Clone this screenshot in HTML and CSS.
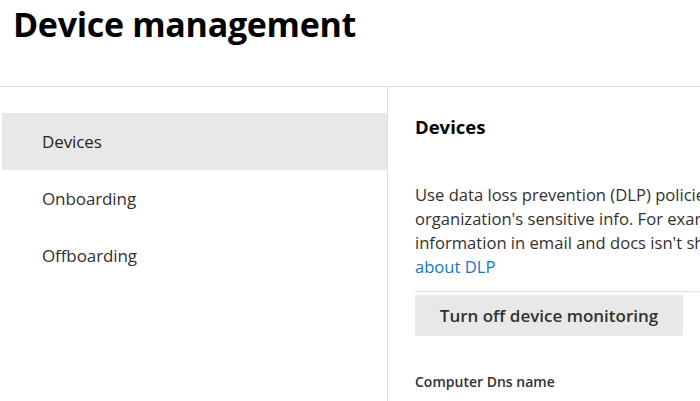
FILE: index.html
```html
<!DOCTYPE html>
<html lang="en">
<head>
<meta charset="utf-8">
<title>Device management</title>
<link rel="stylesheet" href="styles.css">
</head>
<body>
<header class="page-header">
  <h1 class="page-title">Device management</h1>
</header>
<div class="layout">
  <nav class="side-nav">
    <a class="nav-item is-selected">Devices</a>
    <a class="nav-item">Onboarding</a>
    <a class="nav-item">Offboarding</a>
  </nav>
  <main class="content">
    <h2 class="section-title">Devices</h2>
    <p class="description">
      <span class="line">Use data loss prevention (DLP) policies to help protect your</span>
      <span class="line">organization's sensitive info. For example, you can make sure sensitive</span>
      <span class="line">information in email and docs isn't shared outside your organization. <a class="link">Learn more</a></span>
      <span class="line"><a class="link">about DLP</a></span>
    </p>
    <div class="actions">
      <button class="btn">Turn off device monitoring</button>
    </div>
    <div class="field-label">Computer Dns name</div>
  </main>
</div>
</body>
</html>
```
FILE: styles.css
```css
* { box-sizing: border-box; }
html, body {
  margin: 0;
  padding: 0;
  background: #ffffff;
  overflow: hidden;
  height: 401px;
}
body {
  font-family: "Open Sans", "Noto Sans", "Liberation Sans", sans-serif;
  color: #323130;
}
.page-header {
  height: 87px;
  border-bottom: 1px solid #e1dfdd;
  padding: 0 0 0 13px;
}
.page-title {
  margin: 0;
  font-size: 34px;
  font-weight: 700;
  color: #000000;
  line-height: 48px;
  letter-spacing: -0.3px;
}
.layout {
  display: flex;
  height: 314px;
}
.side-nav {
  width: 388px;
  flex: none;
  border-right: 1px solid #e1dfdd;
  padding: 26px 0 0 2px;
  display: flex;
  flex-direction: column;
}
.nav-item {
  height: 57px;
  display: flex;
  align-items: center;
  padding-left: 40px;
  font-size: 17px;
  color: #323130;
  border-radius: 2px;
  letter-spacing: -0.1px;
}
.nav-item.is-selected {
  background: #e8e8e8;
  color: #252423;
}
.content {
  flex: none;
  width: 760px;
  padding: 26px 0 0 27px;
}
.section-title {
  margin: 0;
  font-size: 18.5px;
  font-weight: 700;
  color: #000000;
  line-height: 28px;
}
.description {
  margin: 42px 0 0 0;
  font-size: 16.6px;
  line-height: 24px;
  color: #323130;
}
.description .line {
  display: block;
  white-space: nowrap;
}
.link {
  color: #0f78c8;
}
.actions {
  margin-top: 12px;
  border-top: 1px solid #e1dfdd;
  padding-top: 3px;
}
.btn {
  font-family: inherit;
  width: 268px;
  height: 41px;
  border: none;
  border-radius: 2px;
  background: #e8e8e8;
  color: #323130;
  font-size: 17px;
  font-weight: 600;
  padding: 0;
}
.field-label {
  margin-top: 36px;
  font-size: 14px;
  font-weight: 600;
  color: #323130;
}
```
